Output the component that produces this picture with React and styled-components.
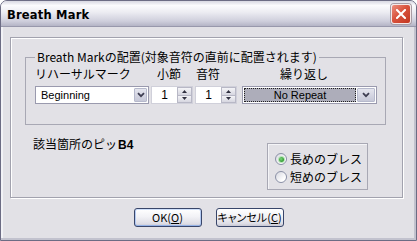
import React from "react";
import styled, { createGlobalStyle } from "styled-components";

const GlobalStyle = createGlobalStyle`
  html, body {
    margin: 0;
    padding: 0;
    background: #ffffff;
  }
  body {
    font-family: "Noto Sans CJK JP", sans-serif;
  }
`;

const jp = `"Noto Sans CJK JP", "Liberation Sans", sans-serif`;
const ui = `"Liberation Sans", "Noto Sans CJK JP", sans-serif`;

const Window = styled.div`
    width: 417px;
    height: 241px;
    box-sizing: border-box;
    display: flex;
    flex-direction: column;
    background: #e2e1e6;
    border: 1px solid #6c6c84;
    border-radius: 7px 7px 0 0;
    overflow: hidden;
    box-shadow: inset -2px -2px 0 #c2c2ce, inset 2px 0 0 #f2f2f6;
`;

const TitleBar = styled.div`
    height: 26px;
    box-sizing: border-box;
    display: flex;
    flex-direction: row;
    justify-content: space-between;
    align-items: center;
    padding: 0 5px 0 6px;
    background: linear-gradient(#d8d8e2 0%, #fbfbfd 18%, #ececf2 45%, #cfcfdc 80%, #b4b4c6 100%);
    border-bottom: 1px solid #9898ac;
`;

const Title = styled.div`
    padding-top: 2px;
    font-family: "DejaVu Sans", sans-serif;
    font-weight: bold;
    font-size: 11.5px;
    letter-spacing: 0.2px;
    color: #000000;
`;

const CloseButton = styled.div`
    width: 20px;
    height: 20px;
    box-sizing: border-box;
    display: flex;
    align-items: center;
    justify-content: center;
    margin-top: 1px;
    border: 1px solid #f4e8e8;
    border-radius: 3px;
    background: linear-gradient(135deg, #ec8f7e 0%, #d9533d 45%, #c2361f 100%);
    box-shadow: 0 0 0 1px #a89ca4;
`;

const Client = styled.div`
    flex: 1;
    display: flex;
    flex-direction: column;
    padding: 10px 13px 0 9px;
`;

const Panel = styled.div`
    height: 161px;
    box-sizing: border-box;
    display: flex;
    flex-direction: column;
    padding: 12px 16px 7px 14px;
    border: 1px solid #a2a2ae;
    box-shadow: 1px 1px 0 #ffffff, inset 1px 1px 0 #ffffff;
`;

const Group = styled.fieldset`
    margin: 0;
    min-width: 0;
    padding: 3px 0 20px 9px;
    border: 1px solid #a8a8b4;
`;

const Legend = styled.legend`
    padding: 0 2px;
    font-family: ${jp};
    font-size: 12px;
    line-height: 14px;
    color: #000000;
`;

const Grid = styled.div`
    display: grid;
    grid-template-columns: 114px 44px 49px 135px;
    row-gap: 5px;
`;

const Label = styled.div`
    padding-left: ${(p) => p.$indent || 0}px;
    font-family: ${jp};
    font-size: 12px;
    line-height: 14px;
    color: #000000;
    white-space: nowrap;
`;

const Combo = styled.div`
    height: 18px;
    box-sizing: border-box;
    display: flex;
    flex-direction: row;
    border: 1px solid #9a9aae;
    background: #ffffff;
`;

const ComboText = styled.div`
    flex: 1;
    padding-left: 5px;
    font-family: ${ui};
    font-size: 11px;
    line-height: 16px;
    color: #000000;
`;

const DropButton = styled.div`
    width: 13px;
    display: flex;
    align-items: center;
    justify-content: center;
    margin: 1px;
    border-radius: 1px;
    background: linear-gradient(#e4e5ee, #c6c8d8);
    border: 1px solid #b6b9cc;
    box-sizing: border-box;
`;

const Spin = styled.div`
    width: 42px;
    height: 18px;
    margin-left: 2px;
    box-sizing: border-box;
    display: flex;
    flex-direction: row;
    background: #ffffff;
    border: 1px solid #d0d0da;
`;

const SpinValue = styled.div`
    flex: 1;
    text-align: center;
    font-family: ${ui};
    font-size: 12px;
    line-height: 16px;
    color: #000000;
`;

const SpinButtons = styled.div`
    width: 15px;
    display: flex;
    flex-direction: column;
`;

const SpinHalf = styled.div`
    flex: 1;
    display: flex;
    align-items: center;
    justify-content: center;
    box-sizing: border-box;
    background: linear-gradient(#f4f4f7, #d6d6e0);
    border: 1px solid #b8b8c6;
    border-top-width: ${(p) => (p.$down ? 0 : 1)}px;
`;

const Repeat = styled.div`
    height: 18px;
    box-sizing: border-box;
    display: flex;
    flex-direction: row;
    padding: 1px;
    border: 1px solid #9a9aae;
    background: #ffffff;
`;

const RepeatField = styled.div`
    flex: 1;
    box-sizing: border-box;
    margin-right: 1px;
    border: 1px dotted #202020;
    background: #adadba;
    text-align: center;
    font-family: ${ui};
    font-size: 11px;
    line-height: 12px;
    color: #000000;
`;

const RepeatButton = styled(DropButton)`
    width: 18px;
    margin: 0;
`;

const Lower = styled.div`
    display: flex;
    flex-direction: row;
    justify-content: space-between;
    align-items: flex-start;
    margin-top: 12px;
    padding: 0 18px 0 8px;
`;

const Pitch = styled.div`
    font-family: ${jp};
    font-size: 12px;
    line-height: 14px;
    color: #000000;
`;

const PitchValue = styled.span`
    margin-left: 1px;
    font-family: "Liberation Sans", sans-serif;
    font-weight: bold;
`;

const RadioBox = styled.div`
    width: 101px;
    height: 47px;
    margin-top: 6px;
    box-sizing: border-box;
    display: flex;
    flex-direction: column;
    padding: 6px 0 0 7px;
    border: 1px solid #a8a8b4;
    box-shadow: inset 1px 1px 0 #f4f4f7;
`;

const RadioRow = styled.div`
    height: 18px;
    display: flex;
    flex-direction: row;
    align-items: center;
    gap: 3px;
    font-family: ${jp};
    font-size: 12px;
    line-height: 14px;
    color: #000000;
`;

const Circle = styled.div`
    width: 12px;
    height: 12px;
    box-sizing: border-box;
    border-radius: 50%;
    display: flex;
    align-items: center;
    justify-content: center;
    border: 1px solid #8a90a6;
    background: linear-gradient(135deg, #d6d7e0, #ffffff 75%);
`;

const Dot = styled.div`
    width: 5px;
    height: 5px;
    border-radius: 50%;
    background: radial-gradient(circle at 40% 40%, #7ed67e, #2f9a2f 70%);
    box-shadow: 0 0 0 1px #b8e4b8;
`;

const ButtonRow = styled.div`
    display: flex;
    flex-direction: row;
    justify-content: center;
    gap: 14px;
    margin-top: 10px;
    padding-left: 4px;
`;

const Button = styled.div`
    width: 68px;
    height: 19px;
    box-sizing: border-box;
    border: 1px solid #39466a;
    border-radius: 3px;
    background: linear-gradient(#ffffff 0%, #f2f2f6 45%, #dedee6 85%, #c8c8d4 100%);
    box-shadow: ${(p) =>
      p.$default
        ? "inset 0 1px 0 #cfe0fb, inset 0 -1px 0 #95b2e6, inset 1px 0 0 #b4caf2, inset -1px 0 0 #b4caf2"
        : "inset 0 1px 0 #ffffff"};
    text-align: center;
    white-space: nowrap;
    font-family: ${jp};
    font-size: 11px;
    font-feature-settings: "palt";
    line-height: 17px;
    color: #000000;
    u {
        text-underline-offset: 1px;
    }
`;

const Chevron = () => (
    <svg width="8" height="6" viewBox="0 0 8 6">
        <path d="M1 1.2 L4 4.2 L7 1.2" fill="none" stroke="#3e3e52" strokeWidth="1.8" />
    </svg>
);

const ArrowUp = () => (
    <svg width="5" height="3" viewBox="0 0 5 3">
        <path d="M2.5 0 L5 3 L0 3 Z" fill="#303040" />
    </svg>
);

const ArrowDown = () => (
    <svg width="5" height="3" viewBox="0 0 5 3">
        <path d="M0 0 L5 0 L2.5 3 Z" fill="#303040" />
    </svg>
);

const CloseX = () => (
    <svg width="10" height="10" viewBox="0 0 10 10">
        <path d="M1 1 L9 9 M9 1 L1 9" stroke="#ffffff" strokeWidth="2" strokeLinecap="square" />
    </svg>
);

const SpinBox = ({ value }) => (
    <Spin>
        <SpinValue>{value}</SpinValue>
        <SpinButtons>
            <SpinHalf><ArrowUp /></SpinHalf>
            <SpinHalf $down><ArrowDown /></SpinHalf>
        </SpinButtons>
    </Spin>
);

const App = () => {
    return (
        <Window>
            <GlobalStyle />
            <TitleBar>
                <Title>Breath Mark</Title>
                <CloseButton><CloseX /></CloseButton>
            </TitleBar>
            <Client>
                <Panel>
                    <Group>
                        <Legend>Breath Markの配置(対象音符の直前に配置されます)</Legend>
                        <Grid>
                            <Label>リハーサルマーク</Label>
                            <Label $indent={8}>小節</Label>
                            <Label $indent={3}>音符</Label>
                            <Label $indent={38}>繰り返し</Label>
                            <Combo>
                                <ComboText>Beginning</ComboText>
                                <DropButton><Chevron /></DropButton>
                            </Combo>
                            <SpinBox value="1" />
                            <SpinBox value="1" />
                            <Repeat>
                                <RepeatField>No Repeat</RepeatField>
                                <RepeatButton><Chevron /></RepeatButton>
                            </Repeat>
                        </Grid>
                    </Group>
                    <Lower>
                        <Pitch>該当箇所のピッ<PitchValue>B4</PitchValue></Pitch>
                        <RadioBox>
                            <RadioRow>
                                <Circle><Dot /></Circle>
                                長めのブレス
                            </RadioRow>
                            <RadioRow>
                                <Circle />
                                短めのブレス
                            </RadioRow>
                        </RadioBox>
                    </Lower>
                </Panel>
                <ButtonRow>
                    <Button $default>OK(<u>O</u>)</Button>
                    <Button>キャンセル(<u>C</u>)</Button>
                </ButtonRow>
            </Client>
        </Window>
    );
};

export default App;
